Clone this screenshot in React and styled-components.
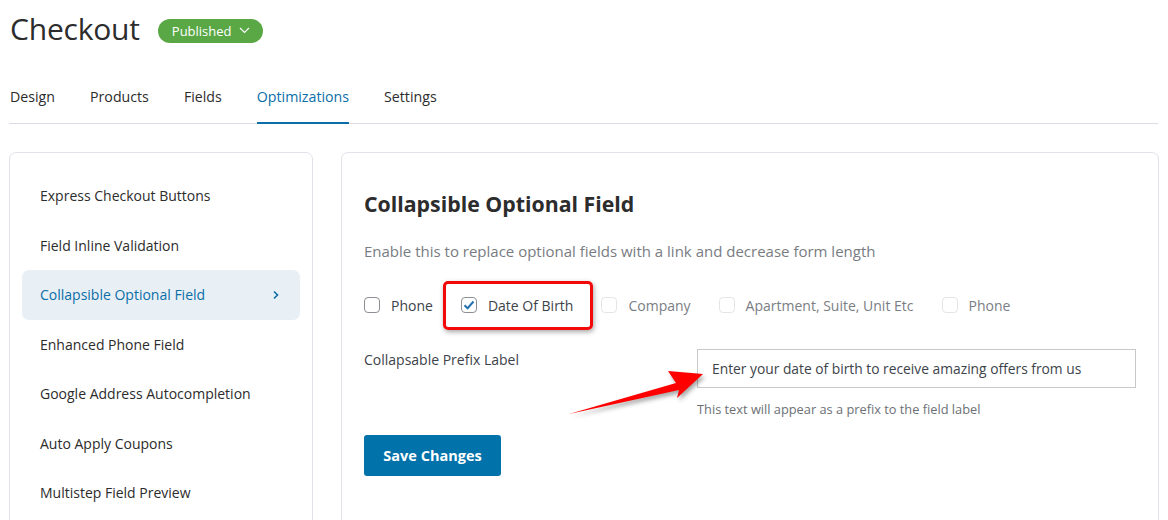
import React from 'react';
import styled, { createGlobalStyle } from 'styled-components';

const Global = createGlobalStyle`
  body {
    margin: 0;
    background: #fff;
    font-family: "Open Sans", "Noto Sans", sans-serif;
    color: #2c3338;
  }
`;

const Page = styled.div`
  width: 1168px;
  height: 520px;
  overflow: hidden;
  padding: 12px 10px 0 9px;
  box-sizing: border-box;
`;

const Header = styled.div`
  display: flex;
  align-items: center;
  gap: 18px;
  padding-left: 1px;
  height: 34px;
`;

const Title = styled.h1`
  margin: 0;
  font-size: 30px;
  font-weight: 500;
  letter-spacing: -0.2px;
  color: #2c2c2c;
  line-height: 34px;
`;

const Badge = styled.button`
  display: flex;
  align-items: center;
  gap: 7px;
  height: 24px;
  margin-top: 3px;
  padding: 0 13px 0 14px;
  border: none;
  border-radius: 12px;
  background: #5aa845;
  color: #fff;
  font-family: inherit;
  font-size: 13px;
  font-weight: 500;
`;

const Tabs = styled.nav`
  display: flex;
  gap: 35px;
  margin-top: 37px;
  padding-left: 1px;
  border-bottom: 1px solid #dcdce4;
`;

const Tab = styled.a`
  font-size: 14.2px;
  font-weight: 500;
  line-height: 20px;
  padding: 4px 0 15px;
  color: ${p => (p.$active ? '#0b6ea8' : '#2c2c2c')};
  border-bottom: 2px solid ${p => (p.$active ? '#0b6ea8' : 'transparent')};
  margin-bottom: -1px;
`;

const Body = styled.div`
  display: grid;
  grid-template-columns: 304px 1fr;
  gap: 28px;
  margin-top: 28px;
`;

const Card = styled.div`
  position: relative;
  border: 1px solid #e2e2ea;
  border-radius: 7px;
  height: 400px;
  box-sizing: border-box;
`;

const Menu = styled(Card)`
  padding: 18px 12px 0;
`;

const MenuItem = styled.div`
  display: flex;
  align-items: center;
  justify-content: space-between;
  height: 49.5px;
  padding: 0 20px 0 18px;
  border-radius: 7px;
  font-size: 14px;
  font-weight: 500;
  color: ${p => (p.$active ? '#0b6ea8' : '#2c2c2c')};
  background: ${p => (p.$active ? '#e9f0f5' : 'transparent')};
`;

const Panel = styled(Card)`
  padding: 37px 22px 0 22px;
`;

const Heading = styled.h2`
  margin: 0;
  font-size: 21.3px;
  font-weight: 700;
  color: #2c2c2c;
  line-height: 28px;
`;

const Desc = styled.p`
  margin: 23px 0 0;
  font-size: 15px;
  color: #787c82;
  line-height: 20px;
`;

const Options = styled.div`
  display: flex;
  gap: 28px;
  margin-top: 34px;
`;

const Option = styled.label`
  position: relative;
  display: flex;
  align-items: center;
  gap: 11px;
  height: 20px;
  font-size: 14px;
  color: ${p => (p.$muted ? '#7a7e84' : '#3c434a')};
`;

const Box = styled.span`
  display: flex;
  align-items: center;
  justify-content: center;
  width: 16px;
  height: 16px;
  box-sizing: border-box;
  border: 1px solid ${p => (p.$muted ? '#e4e5e7' : '#8c8f94')};
  border-radius: 4px;
  background: #fff;
`;

const Highlight = styled.span`
  position: absolute;
  top: -14px;
  bottom: -15px;
  left: -18px;
  right: -20px;
  border: 3px solid #f20a0a;
  border-radius: 5px;
  box-shadow: 1px 2px 5px rgba(0, 0, 0, 0.35);
  pointer-events: none;
`;

const FieldRow = styled.div`
  position: relative;
  display: grid;
  grid-template-columns: 333px 439px;
  margin-top: 34px;
`;

const FieldLabel = styled.div`
  padding-top: 2px;
  font-size: 14px;
  color: #3c434a;
  line-height: 18px;
`;

const Input = styled.div`
  height: 39px;
  box-sizing: border-box;
  border: 1px solid #c8c9cc;
  padding: 0 14px;
  display: flex;
  align-items: center;
  font-size: 13.8px;
  color: #3c434a;
`;

const Help = styled.div`
  margin-top: 12px;
  font-size: 12.8px;
  color: #6c7075;
`;

const Arrow = styled.svg`
  position: absolute;
  left: 197px;
  top: 13px;
  overflow: visible;
  filter: drop-shadow(2px 3px 2px rgba(0, 0, 0, 0.35));
`;

const SaveButton = styled.button`
  margin-top: 17px;
  width: 137px;
  height: 41px;
  border: none;
  border-radius: 3px;
  background: #0272aa;
  color: #fff;
  font-family: inherit;
  font-size: 14.5px;
  font-weight: 700;
`;

const menu = [
  'Express Checkout Buttons',
  'Field Inline Validation',
  'Collapsible Optional Field',
  'Enhanced Phone Field',
  'Google Address Autocompletion',
  'Auto Apply Coupons',
  'Multistep Field Preview',
];

const options = [
  { label: 'Phone' },
  { label: 'Date Of Birth', checked: true, highlight: true },
  { label: 'Company', muted: true },
  { label: 'Apartment, Suite, Unit Etc', muted: true },
  { label: 'Phone', muted: true },
];

const tabs = ['Design', 'Products', 'Fields', 'Optimizations', 'Settings'];

export default function App() {
  return (
    <Page>
      <Global />
      <Header>
        <Title>Checkout</Title>
        <Badge>
          Published
          <svg width="11" height="7" viewBox="0 0 11 7" fill="none">
            <path d="M1 1l4.5 4.5L10 1" stroke="#fff" strokeWidth="1.2" />
          </svg>
        </Badge>
      </Header>

      <Tabs>
        {tabs.map(t => (
          <Tab key={t} $active={t === 'Optimizations'}>{t}</Tab>
        ))}
      </Tabs>

      <Body>
        <Menu>
          {menu.map(m => {
            const active = m === 'Collapsible Optional Field';
            return (
              <MenuItem key={m} $active={active}>
                {m}
                {active && (
                  <svg width="8" height="10" viewBox="0 0 8 10" fill="none">
                    <path d="M2 1.5L5.5 5 2 8.5" stroke="#0b6ea8" strokeWidth="1.6" />
                  </svg>
                )}
              </MenuItem>
            );
          })}
        </Menu>

        <Panel>
          <Heading>Collapsible Optional Field</Heading>
          <Desc>Enable this to replace optional fields with a link and decrease form length</Desc>

          <Options>
            {options.map((o, i) => (
              <Option key={i} $muted={o.muted}>
                <Box $muted={o.muted}>
                  {o.checked && (
                    <svg width="12" height="10" viewBox="0 0 12 10" fill="none">
                      <path d="M1.5 5.2L4.6 8.2 10.5 1.5" stroke="#2271b1" strokeWidth="2" />
                    </svg>
                  )}
                </Box>
                {o.label}
                {o.highlight && <Highlight />}
              </Option>
            ))}
          </Options>

          <FieldRow>
            <FieldLabel>Collapsable Prefix Label</FieldLabel>
            <div>
              <Input>Enter your date of birth to receive amazing offers from us</Input>
              <Help>This text will appear as a prefix to the field label</Help>
            </div>
            <Arrow width="150" height="60" viewBox="0 0 150 60">
              <polygon points="8,52 115,21 107,9 142,12 116,36 118,28" fill="#ff0000" />
            </Arrow>
          </FieldRow>

          <SaveButton>Save Changes</SaveButton>
        </Panel>
      </Body>
    </Page>
  );
}
